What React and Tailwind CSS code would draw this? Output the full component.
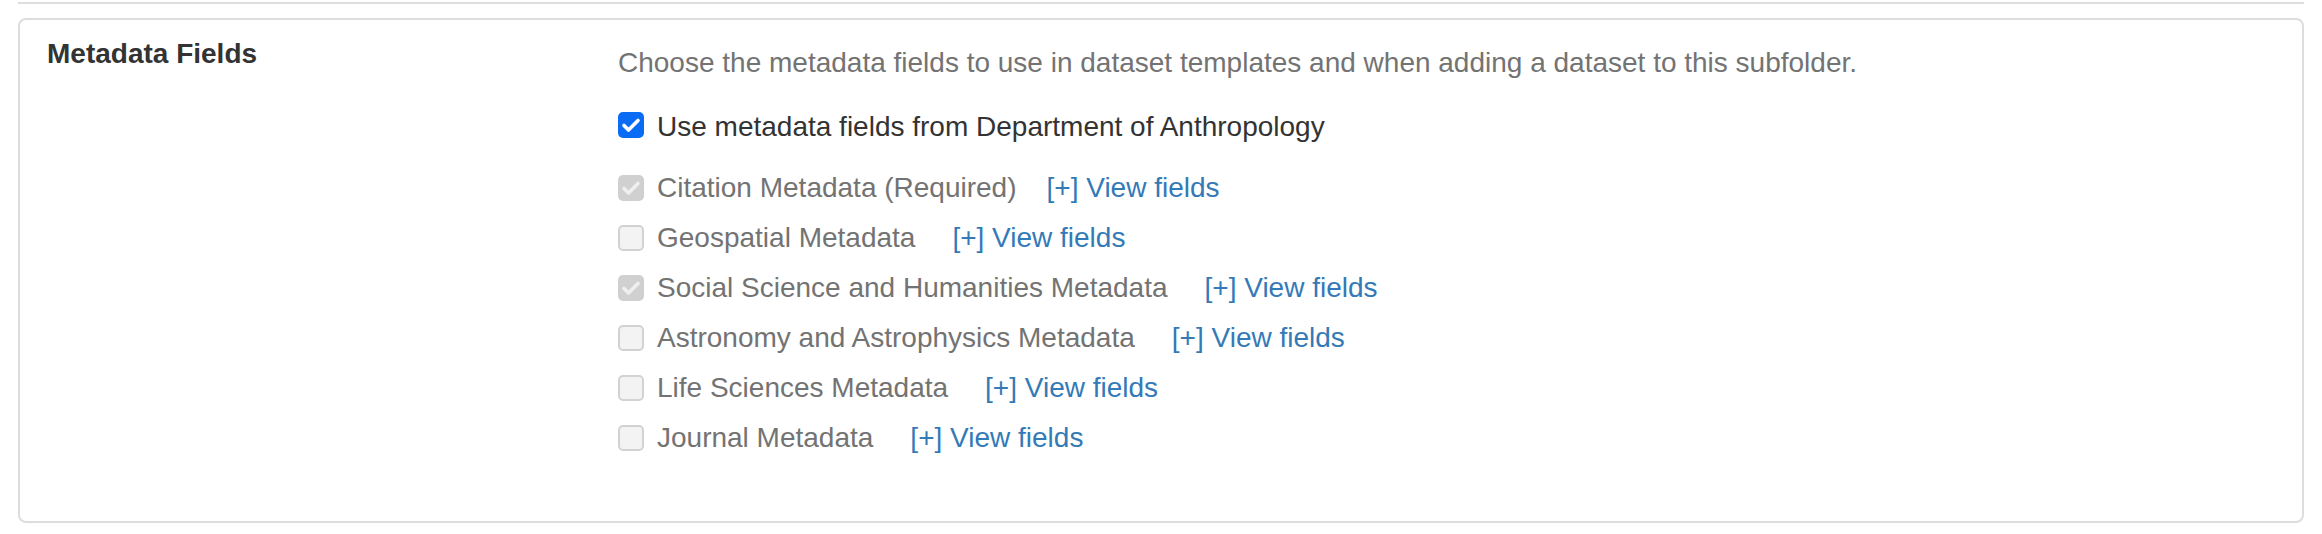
import { useState } from "react";

const fields = [
  { name: "Citation Metadata (Required)", checked: true, gap: "ml-[30px]" },
  { name: "Geospatial Metadata", checked: false, gap: "ml-[37px]" },
  { name: "Social Science and Humanities Metadata", checked: true, gap: "ml-[37px]" },
  { name: "Astronomy and Astrophysics Metadata", checked: false, gap: "ml-[37px]" },
  { name: "Life Sciences Metadata", checked: false, gap: "ml-[37px]" },
  { name: "Journal Metadata", checked: false, gap: "ml-[37px]" },
];

const Check = ({ color }) => (
  <svg viewBox="0 0 26 26" className="h-[26px] w-[26px]">
    <path d="M6 13.5l4.5 4.5L20 8.5" fill="none" stroke={color} strokeWidth="3.6" strokeLinecap="round" strokeLinejoin="round" />
  </svg>
);

// native-looking checkbox, drawn so the disabled greys match
const Box = ({ checked, disabled, onClick, className = "" }) => {
  if (checked && !disabled) {
    return (
      <span onClick={onClick} className={`flex h-[26px] w-[26px] shrink-0 cursor-pointer rounded-[5px] bg-[#0a6cf5] ${className}`}>
        <Check color="#ffffff" />
      </span>
    );
  }
  if (checked) {
    return (
      <span className={`flex h-[26px] w-[26px] shrink-0 rounded-[5px] bg-[#d0d0d0] ${className}`}>
        <Check color="#efefef" />
      </span>
    );
  }
  return (
    <span
      onClick={onClick}
      className={`h-[26px] w-[26px] shrink-0 rounded-[5px] border-2 ${
        disabled ? "border-[#d2d2d2] bg-[#f3f3f3]" : "border-[#767676] bg-white"
      } ${className}`}
    />
  );
};

const App = () => {
  const [useParent, setUseParent] = useState(true);

  return (
    <div
      className="min-h-screen bg-white px-[18px] pt-[2px] text-[28px] text-[#333]"
      style={{ fontFamily: '"Liberation Sans", Arial, sans-serif' }}
    >
      <div className="h-[2px] bg-[#dddddd]" />
      <div className="mt-[14px] flex rounded-lg border-2 border-[#dddddd] pb-[58px]">
        <div className="w-[598px] shrink-0 pl-[27px] pt-[14px]">
          <h3 className="font-bold leading-[40px]">Metadata Fields</h3>
        </div>
        <div className="flex flex-col pt-[23px]">
          <p className="leading-[40px] text-[#737373]">
            Choose the metadata fields to use in dataset templates and when adding a dataset to this subfolder.
          </p>
          <div className="mt-[19px] flex h-[50px] items-center gap-[13px] leading-[40px]">
            <Box checked={useParent} onClick={() => setUseParent(!useParent)} className="mb-[5px]" />
            <span>Use metadata fields from Department of Anthropology</span>
          </div>
          <div className="mt-[11px] flex flex-col">
            {fields.map((f) => (
              <div key={f.name} className="flex h-[50px] items-center leading-[40px]">
                <div className="flex items-center gap-[13px] text-[#737373]">
                  <Box checked={f.checked} disabled />
                  <span>{f.name}</span>
                </div>
                <a href="#" className={`${f.gap} text-[#337ab7]`}>
                  [+] View fields
                </a>
              </div>
            ))}
          </div>
        </div>
      </div>
    </div>
  );
};

export default App;
